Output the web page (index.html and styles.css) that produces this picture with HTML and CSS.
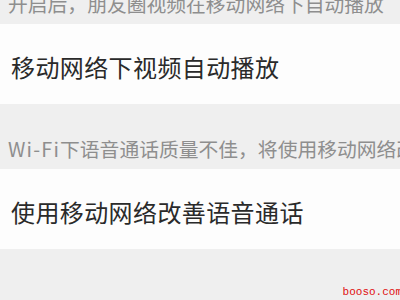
FILE: index.html
```html
<!DOCTYPE html>
<html lang="zh-CN">
<head>
<meta charset="utf-8">
<link rel="stylesheet" href="styles.css">
</head>
<body>
<div class="page">
  <div class="tip tip-top"><p class="tip-text top-text">开启后，朋友圈视频在移动网络下自动播放</p></div>
  <div class="row"><span class="row-text">移动网络下视频自动播放</span></div>
  <div class="tip tip-mid"><p class="tip-text"><span class="latin">Wi-Fi</span>下语音通话质量不佳，将使用移动网络改善语音通话</p></div>
  <div class="row"><span class="row-text">使用移动网络改善语音通话</span></div>
  <div class="tip tip-bottom"></div>
  <span class="mark">booso.com</span>
</div>
</body>
</html>
```
FILE: styles.css
```css
html, body {
  margin: 0;
  padding: 0;
  background: #efefef;
}
.page {
  position: relative;
  width: 400px;
  height: 300px;
  overflow: hidden;
  font-family: "Noto Sans CJK SC", "Noto Sans", sans-serif;
  background: #efefef;
}
.tip {
  background: #efefef;
  overflow: hidden;
}
.tip-text {
  margin: 0;
  padding-left: 8px;
  font-size: 19.8px;
  line-height: 20px;
  color: #8e8e8e;
  white-space: nowrap;
}
.latin {
  letter-spacing: 1.2px;
}
.tip-top {
  height: 24px;
}
.top-text {
  margin-top: -6px;
}
.tip-mid {
  height: 65px;
  display: flex;
  align-items: center;
  padding-top: 25px;
  box-sizing: border-box;
}
.tip-bottom {
  height: 51px;
}
.row {
  height: 80px;
  background: #fdfdfd;
  display: flex;
  align-items: center;
  padding-top: 4px;
  box-sizing: border-box;
}
.row-text {
  padding-left: 11px;
  font-size: 24px;
  letter-spacing: 0.4px;
  color: #2a2a2a;
  white-space: nowrap;
}
.mark {
  position: absolute;
  right: -2px;
  bottom: 2px;
  font-family: "Liberation Mono", monospace;
  font-size: 11px;
  line-height: 11px;
  color: #e01010;
}
```
